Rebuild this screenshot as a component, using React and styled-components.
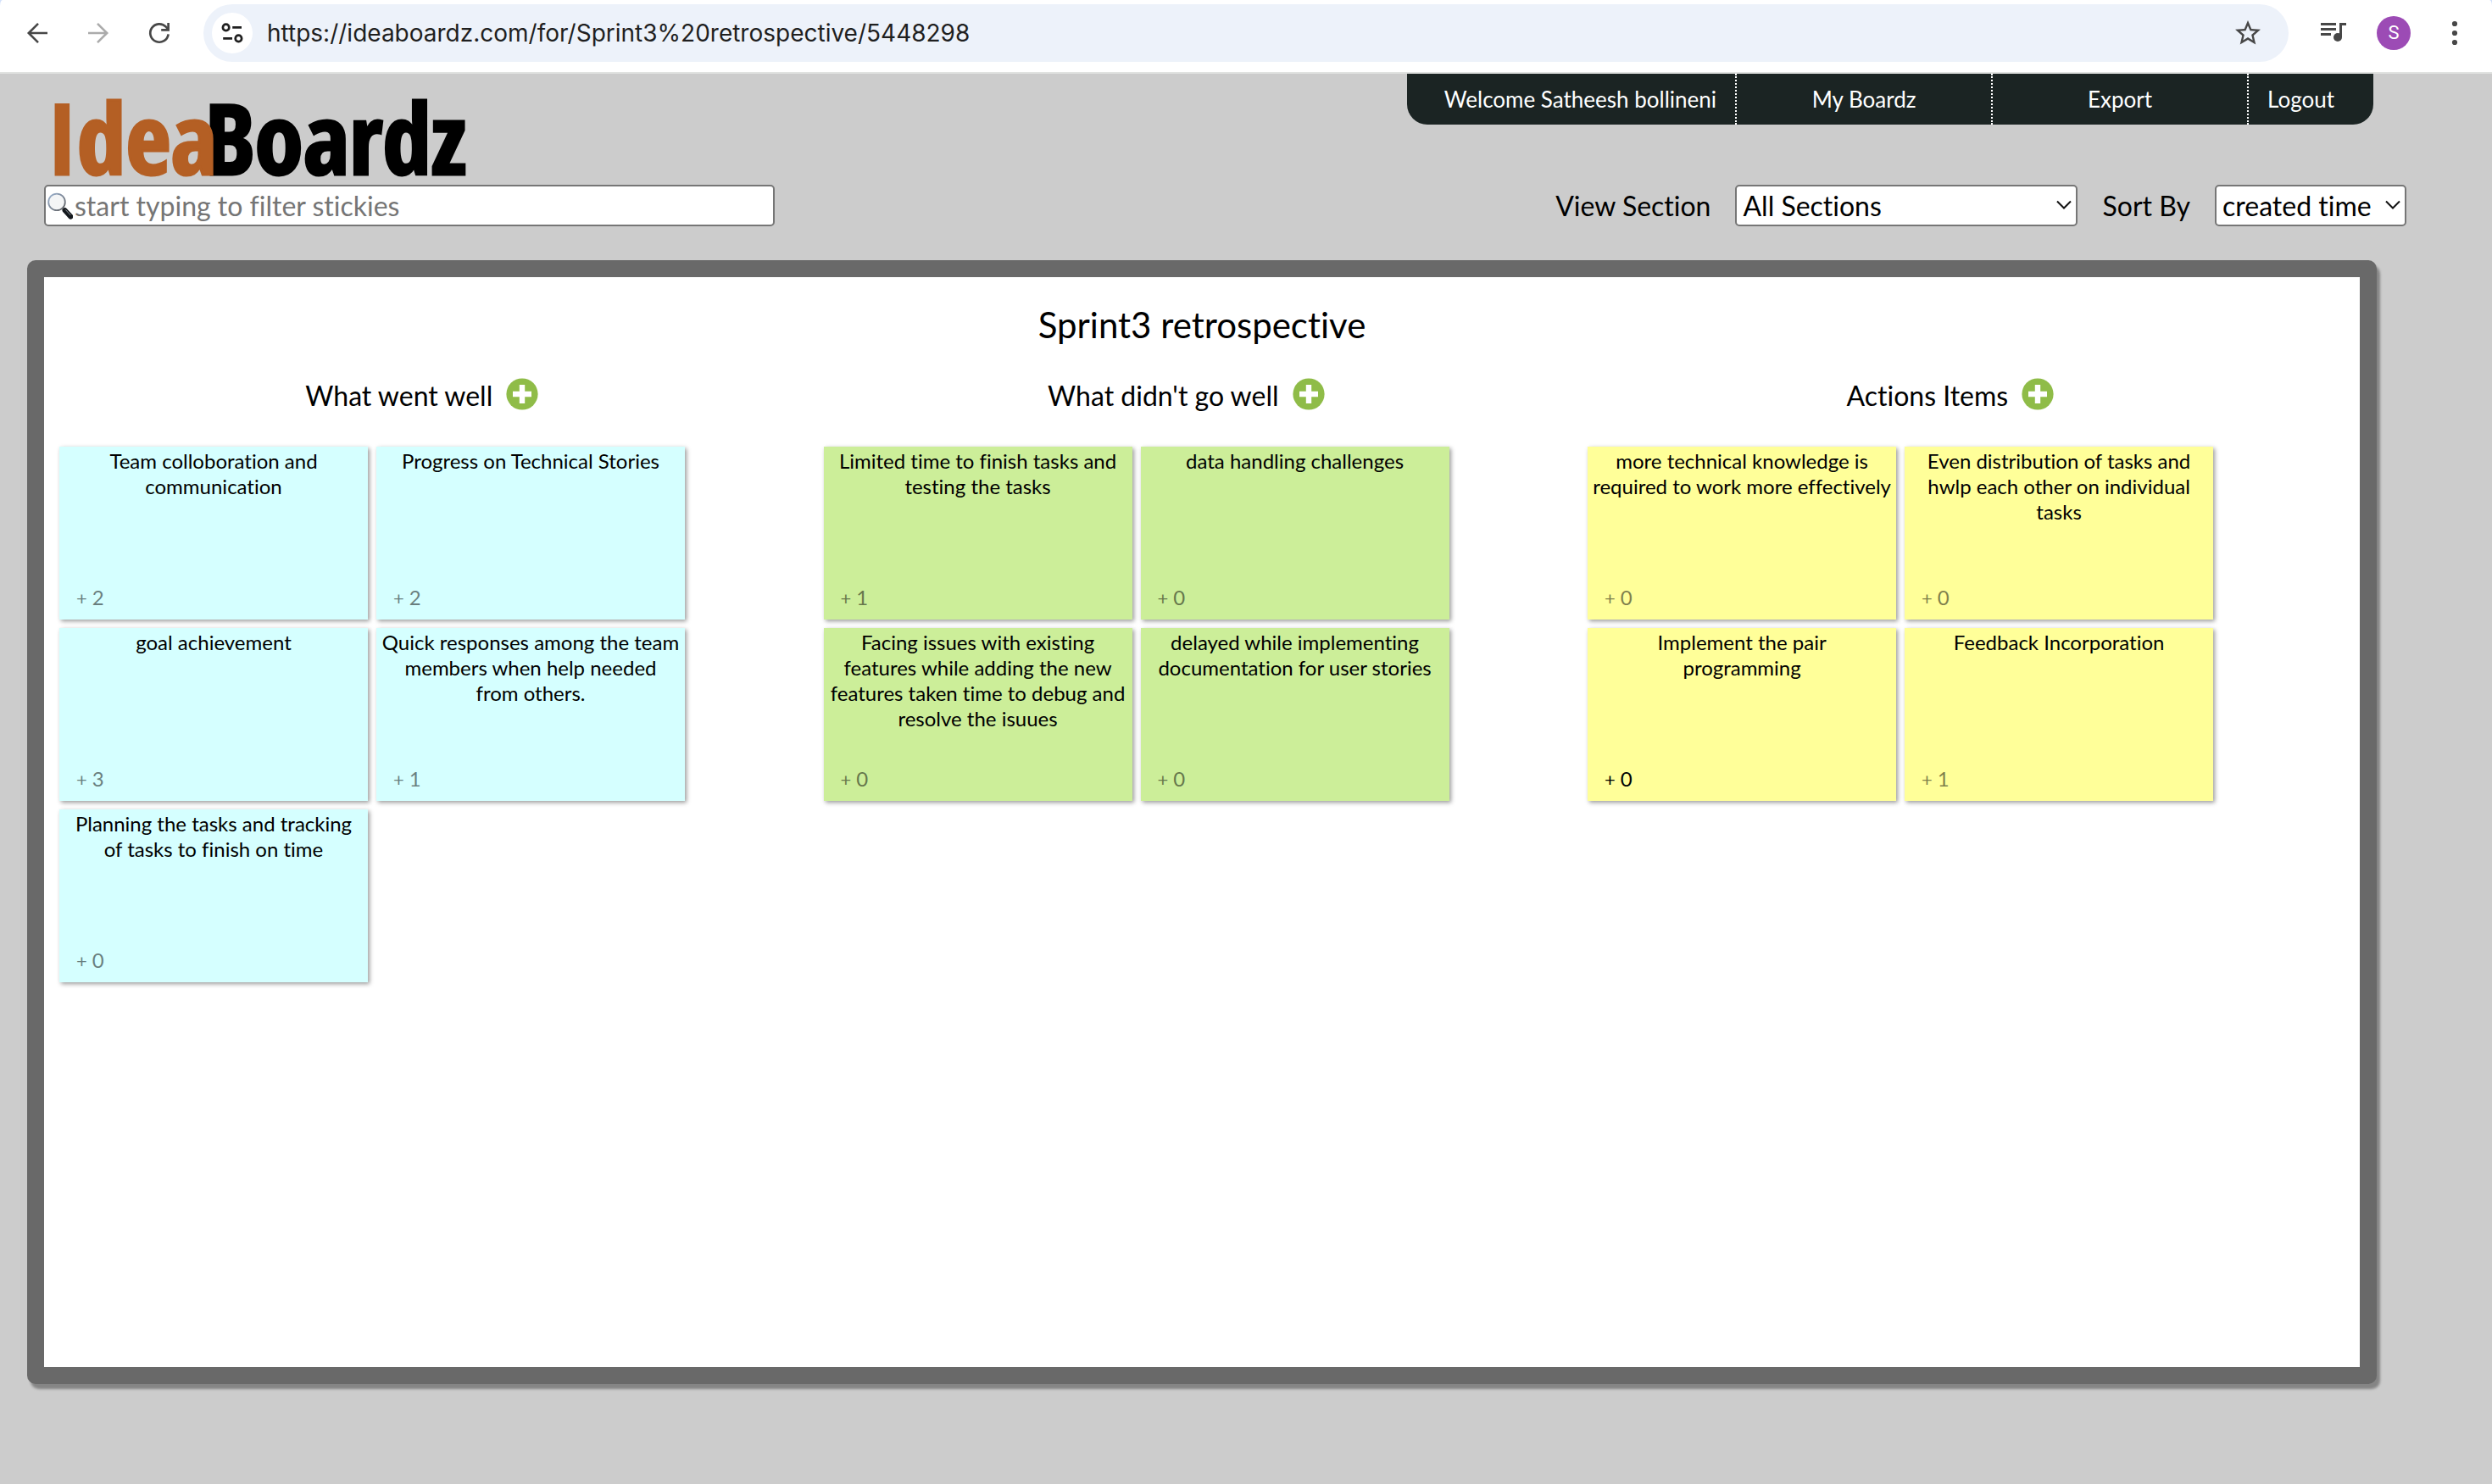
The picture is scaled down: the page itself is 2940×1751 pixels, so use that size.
import React from 'react';
import styled, { createGlobalStyle } from 'styled-components';
import { MdStarBorder } from 'react-icons/md';

const GlobalStyle = createGlobalStyle`
  *, *::before, *::after { box-sizing: border-box; }
  body {
    margin: 0;
    background: #cccccc;
    color: #000;
    font-family: Lato, "Liberation Sans", sans-serif;
    font-variant-ligatures: none;
  }
  input, select, button { font: inherit; color: inherit; font-variant-ligatures: none; }
  button { border: 0; padding: 0; background: none; cursor: pointer; }
  h1, h2, p { margin: 0; font-weight: 400; }
`;

const Page = styled.div`
  min-height: 100vh;
  display: flex;
  flex-direction: column;
`;

/* Browser bar */

const BarBackdrop = styled.div`
  background: #d3e1fb;
`;

const BrowserBar = styled.div`
  display: flex;
  align-items: center;
  gap: 34px;
  padding: 5px 26px 12px;
  background: #fff;
  border-bottom: 2px solid #e0e2e0;
  border-radius: 3px 3px 0 0 / 7px 7px 0 0;
`;

const HistoryButtons = styled.div`
  display: flex;
  gap: 36px;
`;

const IconButton = styled.button`
  width: 36px;
  height: 36px;
  display: grid;
  place-items: center;
  color: #474747;
  opacity: ${(p) => (p.disabled ? 0.45 : 1)};

  svg { display: block; }
`;

const AddressBar = styled.div`
  flex: 1;
  height: 68px;
  display: flex;
  align-items: center;
  gap: 17px;
  padding: 0 30px 0 10px;
  border-radius: 34px;
  background: #edf2fa;
`;

const SiteInfoButton = styled.button`
  width: 48px;
  height: 48px;
  display: grid;
  place-items: center;
  border-radius: 50%;
  background: #fff;
  color: #1f1f1f;
`;

const UrlInput = styled.input`
  flex: 1;
  min-width: 0;
  border: 0;
  padding: 0;
  outline: 0;
  background: none;
  color: #1f1f1f;
  font-family: Inter, "Liberation Sans", sans-serif;
  font-size: 28px;
  line-height: 36px;
`;

const Avatar = styled.button`
  width: 40px;
  height: 40px;
  border-radius: 50%;
  background: #9c4bb5;
  color: #fff;
  font-family: Roboto, sans-serif;
  font-size: 22px;
  line-height: 40px;
`;

/* Site header */

const Header = styled.header`
  display: flex;
  justify-content: space-between;
  align-items: flex-start;
  padding: 0 140px 0 52px;
`;

const Logo = styled.a`
  display: flex;
  height: 99px;
  margin-top: 32px;
  padding-left: 4px;
  color: #000;
  text-decoration: none;
  font-family: "Open Sans Condensed", "Roboto Condensed", sans-serif;
  font-weight: 700;
  font-size: 116px;
  line-height: 84px;
  -webkit-text-stroke: 3px currentColor;
`;

const LogoAccent = styled.span`
  position: relative;
  z-index: 1;
  margin-right: -14px;
  color: #b45f24;
`;

const Nav = styled.nav`
  display: flex;
  height: 60px;
  overflow: hidden;
  border-radius: 0 0 24px 24px;
  background: #1b2423;
`;

const NavLink = styled.a`
  min-width: ${(p) => (p.$wide ? '302px' : '0')};
  padding: 0 22px;
  color: #fff;
  font-size: 26px;
  line-height: 60px;
  text-align: center;
  text-decoration: none;

  &:first-child { padding-left: 44px; }
  &:last-child { padding-right: 46px; }
  & + & { border-left: 2px dotted #fff; }
`;

/* Filter row */

const Toolbar = styled.div`
  display: flex;
  justify-content: space-between;
  align-items: center;
  padding: 0 101px 40px 52px;
  font-size: 32px;
`;

const SearchBox = styled.label`
  flex: 0 1 862px;
  display: flex;
  align-items: center;
  gap: 2px;
  height: 49px;
  padding: 0 2px;
  border: 2px solid #767676;
  border-radius: 5px;
  background: #fff;
`;

const SearchInput = styled.input`
  flex: 1;
  min-width: 0;
  border: 0;
  padding: 0;
  outline: 0;
  background: none;
  line-height: 40px;

  &::placeholder { color: #757575; opacity: 1; }
`;

const Filters = styled.div`
  display: flex;
  gap: 29px;
`;

const Filter = styled.label`
  display: flex;
  align-items: center;
  gap: 29px;
`;

const SelectFrame = styled.span`
  position: relative;
  display: block;
  width: ${(p) => p.$width};

  svg {
    position: absolute;
    right: 7px;
    top: 18px;
    pointer-events: none;
  }
`;

const Select = styled.select`
  appearance: none;
  display: block;
  width: 100%;
  height: 49px;
  padding: 0 30px 0 7px;
  border: 2px solid #767676;
  border-radius: 5px;
  background: #fff;
`;

/* Board */

const Board = styled.main`
  flex: 1;
  margin: 0 136px 118px 32px;
  padding-top: 31px;
  border: 20px solid #696969;
  border-radius: 10px;
  background: #fff;
  box-shadow: 4px 6px 3px #858585;
`;

const BoardTitle = styled.h1`
  font-size: 42px;
  line-height: 50px;
  text-align: center;
`;

const Sections = styled.div`
  display: flex;
  padding-top: 38px;
`;

const Section = styled.section`
  width: 33%;
`;

const SectionHeader = styled.header`
  display: flex;
  justify-content: center;
  align-items: flex-start;
  gap: 16px;
  padding: 0 10px 39px 0;
`;

const SectionTitle = styled.h2`
  font-size: 32px;
  line-height: 42px;
`;

const AddButton = styled.button`
  svg { display: block; }
`;

const Stickies = styled.div`
  display: flex;
  flex-wrap: wrap;
  gap: 10px;
  padding-left: 18px;
`;

const Sticky = styled.article`
  width: 364px;
  height: 204px;
  display: flex;
  flex-direction: column;
  justify-content: space-between;
  padding: 2px 2px 10px;
  background: ${(p) => p.$color};
  box-shadow: 2px 2px 5px rgba(0, 0, 0, 0.4);
  font-size: 24px;
  line-height: 30px;
`;

const StickyText = styled.p`
  text-align: center;
  white-space: pre-line;
`;

const VoteButton = styled.button`
  align-self: flex-start;
  display: flex;
  align-items: baseline;
  gap: 6px;
  padding-left: 18px;
  line-height: 30px;
  opacity: ${(p) => (p.$active ? 1 : 0.5)};
`;

const VotePlus = styled.span`
  font-size: 22px;
`;

const Chevron = () => (
  <svg width="18" height="12" viewBox="0 0 18 12" fill="none" stroke="#111" strokeWidth="2" aria-hidden="true">
    <path d="M1 1.5 9 9.5 17 1.5" />
  </svg>
);

const BackIcon = () => (
  <svg width="36" height="36" viewBox="0 0 36 36" fill="none" stroke="currentColor" strokeWidth="2.6" aria-hidden="true">
    <path d="M30 18H8M19 6.8 7.8 18 19 29.2" />
  </svg>
);

const ForwardIcon = () => (
  <svg width="36" height="36" viewBox="0 0 36 36" fill="none" stroke="currentColor" strokeWidth="2.6" aria-hidden="true">
    <path d="M6 18H28M17 6.8 28.2 18 17 29.2" />
  </svg>
);

const ReloadIcon = () => (
  <svg width="36" height="36" viewBox="0 0 36 36" fill="none" stroke="currentColor" strokeWidth="2.7" aria-hidden="true">
    <path d="M28.6 19.3A10.7 10.7 0 1 1 25.8 10.7L28 13" />
    <path d="M28.6 6V14.4H20.2" />
  </svg>
);

const TuneIcon = () => (
  <svg width="28" height="28" viewBox="0 0 28 28" fill="none" stroke="currentColor" strokeWidth="2.7" aria-hidden="true">
    <circle cx="6.6" cy="7.4" r="3.7" />
    <path d="M14.2 7.4H25M3.2 20.4H14" />
    <circle cx="21.4" cy="20.4" r="3.7" />
  </svg>
);

const QueueIcon = () => (
  <svg width="36" height="36" viewBox="0 0 36 36" fill="currentColor" aria-hidden="true">
    <path d="M4 6H22V9H4ZM4 12H22V15H4ZM4 18H16V21H4ZM26 6H34V9H29V23H26Z" />
    <circle cx="24" cy="23" r="5" />
  </svg>
);

const MenuIcon = () => (
  <svg width="36" height="36" viewBox="0 0 36 36" fill="currentColor" aria-hidden="true">
    <circle cx="18" cy="7" r="3.1" />
    <circle cx="18" cy="18" r="3.1" />
    <circle cx="18" cy="29" r="3.1" />
  </svg>
);

const MagnifierIcon = () => (
  <svg width="30" height="32" viewBox="0 0 30 32" aria-hidden="true">
    <defs>
      <linearGradient id="rim" x1="0" y1="0" x2="1" y2="1">
        <stop offset="0" stopColor="#9db4d2" />
        <stop offset="1" stopColor="#5d5d5f" />
      </linearGradient>
    </defs>
    <path d="M18 19 22 23" stroke="#77797c" strokeWidth="3" />
    <path d="M20.6 21.2 27.4 28.6" stroke="#14181d" strokeWidth="6" strokeLinecap="round" />
    <path d="M21.6 20.8 27 26.6" stroke="#8b9299" strokeWidth="1" strokeLinecap="round" />
    <circle cx="11" cy="11.4" r="9.8" fill="#f4f5f6" stroke="url(#rim)" strokeWidth="1.8" />
  </svg>
);

const AddIcon = () => (
  <svg width="38" height="38" viewBox="0 0 38 38" aria-hidden="true">
    <circle cx="19" cy="19" r="18.6" fill="#8fbc48" />
    <path d="M19 8V30M8 19H30" stroke="#fff" strokeWidth="6.4" />
  </svg>
);

const sections = [
  {
    title: 'What went well',
    color: '#d5ffff',
    notes: [
      { text: 'Team colloboration and communication', votes: 2 },
      { text: 'Progress on Technical Stories', votes: 2 },
      { text: 'goal achievement', votes: 3 },
      { text: 'Quick responses among the team members when help needed\nfrom others.', votes: 1 },
      { text: 'Planning the tasks and tracking\nof tasks to finish on time', votes: 0 },
    ],
  },
  {
    title: "What didn't go well",
    color: '#ccee99',
    notes: [
      { text: 'Limited time to finish tasks and testing the tasks', votes: 1 },
      { text: 'data handling challenges', votes: 0 },
      { text: 'Facing issues with existing features while adding the new features taken time to debug and resolve the isuues', votes: 0 },
      { text: 'delayed while implementing documentation for user stories', votes: 0 },
    ],
  },
  {
    title: 'Actions Items',
    color: '#ffff99',
    notes: [
      { text: 'more technical knowledge is required to work more effectively', votes: 0 },
      { text: 'Even distribution of tasks and hwlp each other on individual tasks', votes: 0 },
      { text: 'Implement the pair\nprogramming', votes: 0, active: true },
      { text: 'Feedback Incorporation', votes: 1 },
    ],
  },
];

export default function App() {
  return (
    <Page>
      <GlobalStyle />
      <BarBackdrop>
        <BrowserBar>
          <HistoryButtons>
            <IconButton aria-label="Back"><BackIcon /></IconButton>
            <IconButton aria-label="Forward" disabled><ForwardIcon /></IconButton>
            <IconButton aria-label="Reload"><ReloadIcon /></IconButton>
          </HistoryButtons>
          <AddressBar>
            <SiteInfoButton aria-label="Site information"><TuneIcon /></SiteInfoButton>
            <UrlInput
              aria-label="Address"
              defaultValue="https://ideaboardz.com/for/Sprint3%20retrospective/5448298"
            />
            <IconButton aria-label="Bookmark"><MdStarBorder size={36} /></IconButton>
          </AddressBar>
          <IconButton aria-label="Media controls"><QueueIcon /></IconButton>
          <Avatar aria-label="Profile">S</Avatar>
          <IconButton aria-label="Menu"><MenuIcon /></IconButton>
        </BrowserBar>
      </BarBackdrop>

      <Header>
        <Logo href="#home">
          <LogoAccent>Idea</LogoAccent>
          <span>Boardz</span>
        </Logo>
        <Nav>
          <NavLink href="#profile">Welcome Satheesh bollineni</NavLink>
          <NavLink href="#boards" $wide>My Boardz</NavLink>
          <NavLink href="#export" $wide>Export</NavLink>
          <NavLink href="#logout">Logout</NavLink>
        </Nav>
      </Header>

      <Toolbar>
        <SearchBox>
          <MagnifierIcon />
          <SearchInput type="text" aria-label="Filter stickies" placeholder="start typing to filter stickies" />
        </SearchBox>
        <Filters>
          <Filter>
            View Section
            <SelectFrame $width="404px">
              <Select defaultValue="all">
                <option value="all">All Sections</option>
                {sections.map((s) => <option key={s.title}>{s.title}</option>)}
              </Select>
              <Chevron />
            </SelectFrame>
          </Filter>
          <Filter>
            Sort By
            <SelectFrame $width="226px">
              <Select defaultValue="created time">
                <option>created time</option>
                <option>votes</option>
              </Select>
              <Chevron />
            </SelectFrame>
          </Filter>
        </Filters>
      </Toolbar>

      <Board>
        <BoardTitle>Sprint3 retrospective</BoardTitle>
        <Sections>
          {sections.map((section) => (
            <Section key={section.title}>
              <SectionHeader>
                <SectionTitle>{section.title}</SectionTitle>
                <AddButton aria-label={`Add to ${section.title}`}><AddIcon /></AddButton>
              </SectionHeader>
              <Stickies>
                {section.notes.map((note) => (
                  <Sticky key={note.text} $color={section.color}>
                    <StickyText>{note.text}</StickyText>
                    <VoteButton $active={note.active}>
                      <VotePlus>+</VotePlus>
                      <span>{note.votes}</span>
                    </VoteButton>
                  </Sticky>
                ))}
              </Stickies>
            </Section>
          ))}
        </Sections>
      </Board>
    </Page>
  );
}
